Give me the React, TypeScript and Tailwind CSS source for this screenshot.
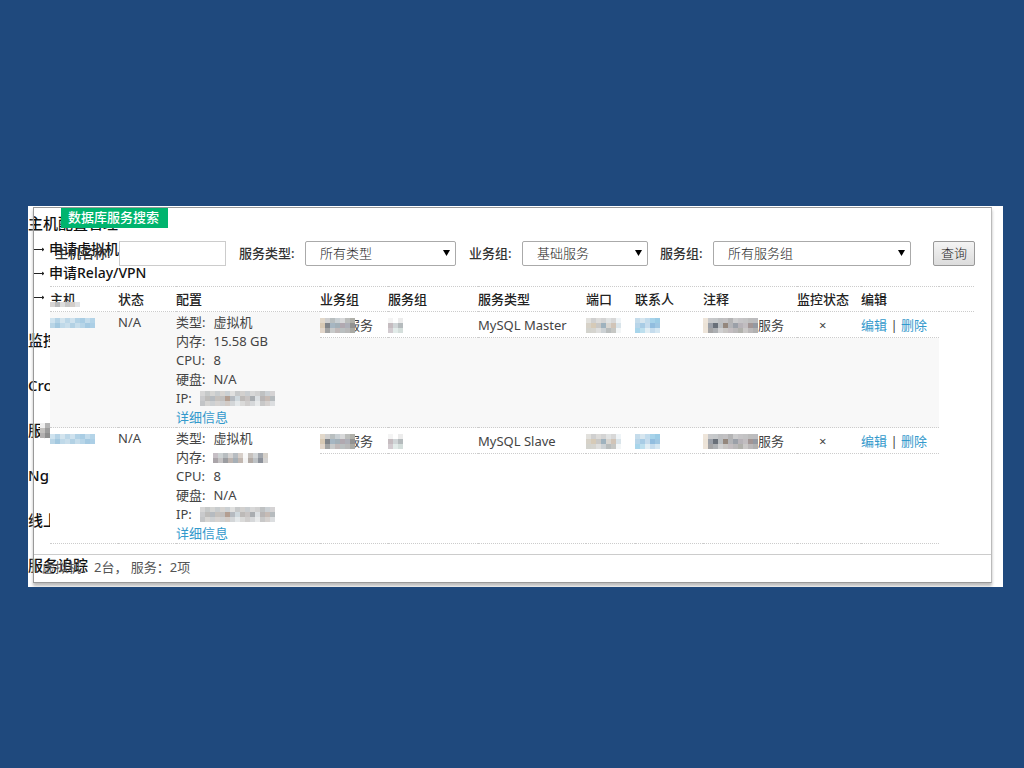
import { useState } from "react";

const fontStack = "font-['Noto_Sans','Noto_Sans_CJK_SC',sans-serif]";

const masks = {
  host: ["#cfe3ef #b5d3e6 #d3e4ee #bcd7e8 #cfe2ee #b2d2e6 #a9cde4 #c3dcec #b4d4e8", "#b9d5e6 #a3c8df #bfd9e9 #c9deeb #b2d1e4 #c6ddeb #b7d5e8 #a5cae2 #accfe6"],
  group: ["#e2d8ca #d0d0d0 #b9bfc0 #c9d0d4 #d8d9da #bcbebc #b0b0a9", "#d8c9b4 #808489 #a6b6c2 #a3b0b8 #b1a9b0 #aeb0b8 #929290", "#e2d6ca #a2a3a3 #c8caca #c0b9b9 #babfc0 #b9b9b9 #a9a9a3"],
  service: ["#f4f4f4 #ffffff #ececec", "#c5bcc0 #d0d5d7 #b5bbbd", "#d2cbd0 #e2ebe9 #d4dedb"],
  port: ["#e2e1dd #d0d0d0 #dddcda #d4d4d4 #e1e3e3 #d8d8d8 #eff4f7", "#d7d2c8 #d6cab7 #c9c8c6 #9fb2be #d8d5d0 #d1c4b7 #d9e4ea", "#d3d3cd #d5d4cf #dededd #ccd1d4 #b9bdbd #c6c7c4 #f3f6f7"],
  contact: ["#c5dceb #d7e6ef #c2dced #a7d3ea #9bcce6", "#b8d5e9 #a8cce5 #c6dced #91bddf #9fc7e3", "#a8d5eb #bddfee #e2eef4 #c5dced #d5e7f2"],
  note: ["#eee5da #c8c9cb #c5c8ca #bebfc1 #c2c1c3 #b4b4b5 #cccccd #c6c5c7 #c3c3c4 #bdbdbd #bcbcbf", "#ece3d7 #9ba0a8 #697079 #b9bdc0 #94877d #b3b4b7 #9ba0a8 #b7b3b8 #c1bdc0 #a29594 #9499a2", "#ede4d9 #a4a4a5 #adb0b3 #d0d0d1 #c8c6c4 #c3bdc0 #bab8b9 #b1b1ac #cac8c7 #bbb8b9 #b1b1b1"],
  ip: ["#d6d6d6 #c6c9c9 #d5d5d3 #c8ccce #d6d3d0 #cbd0d3 #e0e0df #c7c9ca #d2d0ce #c9cdd0 #d8d8d8 #d1d1d1 #bfc1c2 #cbd0d4 #d5d3d4", "#c9cacc #bdbcba #b6bbc0 #c5c1bd #c1bfbe #b39e91 #b5bac0 #cfd8dd #bdbab8 #c8c4c3 #a9adb1 #dce0e3 #b8b5b5 #c6bbb5 #b6bbbe", "#c3c5c7 #d6d5d3 #cdd0d2 #d6d3d1 #cfd0d1 #d2cbc6 #d3d6d8 #e4e8ea #dadad9 #d0cecd #d6d8da #e8eaeb #c8c8c8 #d5d1cf #dcdee0"],
  memory: ["#c6bfc5 #cdd2d3 #b8bdc0 #d5d3d2 #b7bcc1 #d7cfc9 #f8f8f8 #c6c1bd #d2d5d7 #a2a7ae #d5d0c9", "#aaa5a9 #c5c3c4 #9b9da1 #bdb4af #a6afb6 #c2b7b0 #f4f4f4 #b2aaa5 #bec2c5 #8c919a #d4d3d2"],
  heading: ["#d6d3d2 #b9b9ba #dcdcdc #c6c6c6 #d2cdc9 #dfe1e3"],
  smudge: ["#f0f0f0 #b4b4b4", "#c2c0be #9c9c9c", "#b2b0b0 #8e8e8e"],
};

function Mosaic({ name }: { name: keyof typeof masks }) {
  const size = 5;
  const rows = masks[name].map((row) => row.split(" "));
  const width = rows[0].length * size;
  const height = rows.length * size;
  return (
    <svg className="relative inline-block shrink-0" width={width} height={height} shapeRendering="crispEdges" aria-hidden="true">
      {rows.map((row, y) => row.map((fill, x) => <rect key={`${x}-${y}`} x={x * size} y={y * size} width={size} height={size} fill={fill} />))}
    </svg>
  );
}

function Arrow() {
  return (
    <svg width="11" height="7" viewBox="0 0 11 7" fill="none" stroke="#222" aria-hidden="true">
      <path d="M0 3.5h10M8 2l2 1.5L8 5" />
    </svg>
  );
}

function Sidebar() {
  return (
    <nav className="absolute inset-y-0 left-0 w-44 overflow-hidden text-[15px] font-medium whitespace-nowrap text-[#111]">
      <h2 className="mt-[5px] h-6 leading-6">主机配置管理</h2>
      <ul className="ml-[6px] pt-[2px] text-sm leading-6">
        {["申请虚拟机", "申请Relay/VPN", ""].map((label) => (
          <li key={label} className="flex h-6 items-center gap-1">
            <Arrow />
            <a href="#">{label}</a>
          </li>
        ))}
      </ul>
      <ul className="pt-[9px]">
        {["监控管理", "Cron管理", "服务管理", "Nginx", "线上", "服务追踪"].map((label) => (
          <li key={label} className="relative flex h-[45px] items-center">
            <a href="#">{label}</a>
            {label === "服务管理" && <span className="absolute left-3 flex"><Mosaic name="smudge" /></span>}
          </li>
        ))}
      </ul>
    </nav>
  );
}

function Select({ id, options, className }: { id: string; options: string[]; className: string }) {
  return (
    <div className={`relative ${className}`}>
      <select id={id} className="h-[25px] w-full appearance-none rounded-xs border border-[#aaa] bg-white pl-[14px] text-[13px] font-light text-[#222]">
        {options.map((option) => <option key={option}>{option}</option>)}
      </select>
      <svg className="pointer-events-none absolute top-[9px] right-[6px]" width="7" height="6" viewBox="0 0 7 6" aria-hidden="true">
        <path d="M0 0h7L3.5 6z" fill="#000" />
      </svg>
    </div>
  );
}

function SearchBar() {
  const [host, setHost] = useState("");
  return (
    <form onSubmit={(event) => event.preventDefault()} className="flex items-center pt-[13px] pr-4 pl-[21px] font-medium text-[#333]">
      <label htmlFor="host" className="w-[64px] whitespace-nowrap">主机名称:</label>
      <input id="host" value={host} onChange={(event) => setHost(event.target.value)} className="h-[25px] w-[107px] border border-[#ccc] bg-white px-1 outline-none" />
      <label htmlFor="type" className="ml-[13px] w-[66px] whitespace-nowrap">服务类型:</label>
      <Select id="type" options={["所有类型", "MySQL Master", "MySQL Slave"]} className="w-[151px]" />
      <label htmlFor="business" className="ml-[13px] w-[53px] whitespace-nowrap">业务组:</label>
      <Select id="business" options={["基础服务"]} className="w-[126px]" />
      <label htmlFor="group" className="ml-3 w-[53px] whitespace-nowrap">服务组:</label>
      <Select id="group" options={["所有服务组"]} className="min-w-[140px] flex-1" />
      <button type="submit" className="ml-[22px] h-[25px] w-[42px] rounded-xs border border-[#999] bg-linear-to-b from-[#f4f4f4] to-[#dcdcdc] text-[13px] font-light text-[#222]">查询</button>
    </form>
  );
}

const hosts = [
  { id: 1, type: "MySQL Master", memory: "15.58 GB", striped: true },
  { id: 2, type: "MySQL Slave", memory: null, striped: false },
];

const headers = ["主机", "状态", "配置", "业务组", "服务组", "服务类型", "端口", "联系人", "注释", "监控状态", "编辑", ""];

function HostTable() {
  return (
    <table className="w-full table-fixed border-collapse text-left leading-[19px] text-[#444]">
      <colgroup>
        <col className="w-[68px]" />
        <col className="w-[58px]" />
        <col className="w-[144px]" />
        <col className="w-[68px]" />
        <col className="w-[90px]" />
        <col />
        <col className="w-[49px]" />
        <col className="w-[68px]" />
        <col className="w-[94px]" />
        <col className="w-[64px]" />
        <col className="w-[78px]" />
        <col className="w-[35px]" />
      </colgroup>
      <thead>
        <tr className="h-[25px] border-y border-dotted border-[#ccc] text-[#222]">
          {headers.map((header) => (
            <th key={header} scope="col" className="relative p-0 font-medium whitespace-nowrap">
              {header}
              {header === "主机" && <span className="absolute bottom-1 left-0 flex"><Mosaic name="heading" /></span>}
            </th>
          ))}
        </tr>
      </thead>
      {hosts.map((host) => {
        const stripe = host.striped ? "bg-[#f8f8f8]" : "bg-white";
        const lead = `border-b border-dotted border-[#ccc] p-0 pt-px align-top ${stripe}`;
        const cell = "border-b border-dotted border-[#ccc] bg-white p-0 pt-px whitespace-nowrap";
        return (
          <tbody key={host.id}>
            <tr className="h-[26px]">
              <td rowSpan={2} className={lead}>
                <a href="#" className="flex h-[19px] items-center" aria-label="主机"><Mosaic name="host" /></a>
              </td>
              <td rowSpan={2} className={lead}>N/A</td>
              <td rowSpan={2} className={lead}>
                <dl className="grid grid-cols-[auto_1fr] gap-x-2">
                  <dt>类型:</dt><dd>虚拟机</dd>
                  <dt>内存:</dt><dd className="flex items-center">{host.memory ?? <Mosaic name="memory" />}</dd>
                  <dt>CPU:</dt><dd>8</dd>
                  <dt>硬盘:</dt><dd>N/A</dd>
                </dl>
                <p className="flex items-center gap-2">IP: <Mosaic name="ip" /></p>
                <a href="#" className="block text-[#3399cc]">详细信息</a>
              </td>
              <td className={cell}>
                <span className="flex items-center">
                  <Mosaic name="group" />
                  <span className="-ml-2">服务</span>
                </span>
              </td>
              <td className={cell}><span className="flex"><Mosaic name="service" /></span></td>
              <td className={cell}>{host.type}</td>
              <td className={cell}><span className="flex"><Mosaic name="port" /></span></td>
              <td className={cell}><span className="flex"><Mosaic name="contact" /></span></td>
              <td className={cell}><span className="flex items-center"><Mosaic name="note" />服务</span></td>
              <td className={`${cell} pl-[22px]`}>×</td>
              <td className={cell}><a href="#" className="text-[#3399cc]">编辑</a> | <a href="#" className="text-[#3399cc]">删除</a></td>
            </tr>
            <tr>
              <td colSpan={8} className={`border-b border-dotted border-[#ccc] p-0 ${stripe}`} />
            </tr>
          </tbody>
        );
      })}
    </table>
  );
}

export default function App() {
  return (
    <main className={`min-h-screen bg-[#1f497d] pt-[206px] pr-[21px] pb-10 pl-7 text-[13px] ${fontStack}`}>
      <div className="relative overflow-hidden bg-white pt-px pr-[11px] pb-1 pl-[5px]">
        <Sidebar />
        <section className="relative border border-[#999] border-r-[#bbb] shadow-[0_3px_3px_#bbb]">
          <h1 className="ml-[27px] h-5 w-[107px] bg-[#00b46e] pl-[7px] leading-[19px] font-medium text-white">数据库服务搜索</h1>
          <SearchBar />
          <div className="pt-5 pr-[17px] pb-[10px] pl-4">
            <HostTable />
          </div>
          <footer className="h-7 border-t border-[#ccc] pl-2 leading-[25px] text-[#555]">虚拟机：2台， 服务：2项</footer>
        </section>
      </div>
    </main>
  );
}
